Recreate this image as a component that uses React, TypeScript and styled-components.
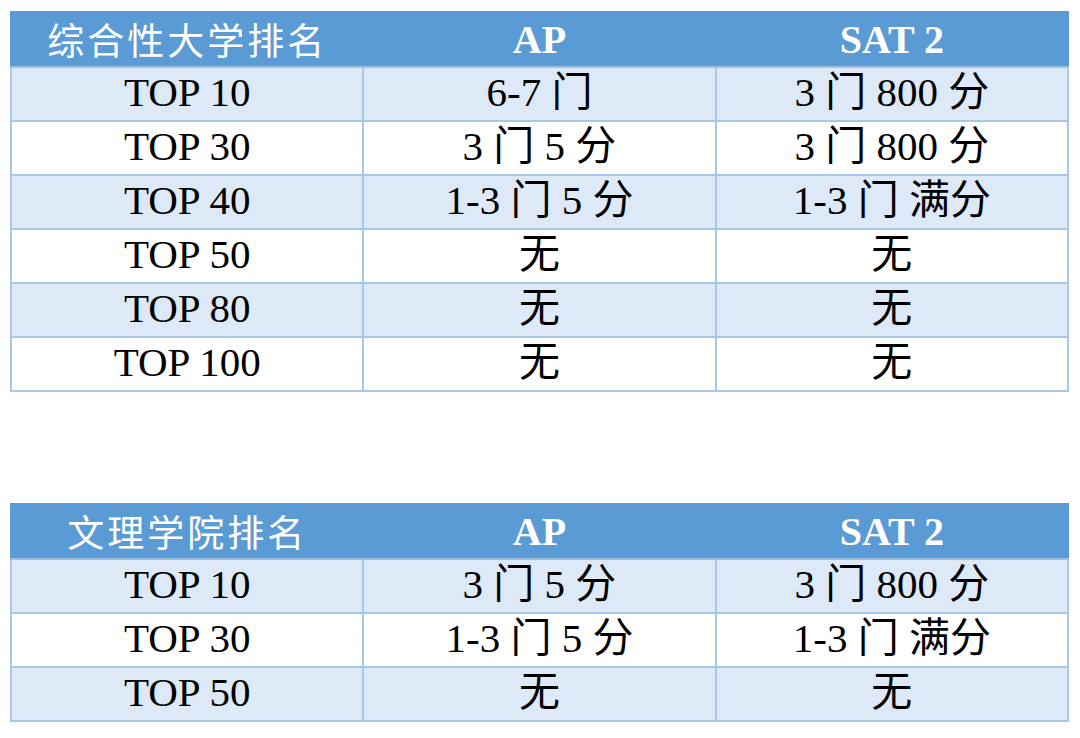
import styled, { createGlobalStyle } from 'styled-components';

const GlobalStyle = createGlobalStyle`
  html, body {
    margin: 0;
    padding: 0;
    background: #ffffff;
  }
`;

type Row = [string, string, string];

const comprehensive: Row[] = [
  ['TOP 10', '6-7 门', '3 门 800 分'],
  ['TOP 30', '3 门 5 分', '3 门 800 分'],
  ['TOP 40', '1-3 门 5 分', '1-3 门 满分'],
  ['TOP 50', '无', '无'],
  ['TOP 80', '无', '无'],
  ['TOP 100', '无', '无'],
];

const liberalArts: Row[] = [
  ['TOP 10', '3 门 5 分', '3 门 800 分'],
  ['TOP 30', '1-3 门 5 分', '1-3 门 满分'],
  ['TOP 50', '无', '无'],
];

const RankTable = ({ title, rows }: { title: string; rows: Row[] }) => {
  return (
    <Table>
      <thead>
        <tr>
          <TitleCell>{title}</TitleCell>
          <HeadCell>AP</HeadCell>
          <HeadCell>SAT 2</HeadCell>
        </tr>
      </thead>
      <tbody>
        {rows.map((row, i) => (
          <BodyRow key={row[0]} $banded={i % 2 === 0}>
            {row.map((cell, j) => (
              <Cell key={j}>{cell}</Cell>
            ))}
          </BodyRow>
        ))}
      </tbody>
    </Table>
  );
};

const App = () => {
  return (
    <Page>
      <GlobalStyle />
      <RankTable title="综合性大学排名" rows={comprehensive} />
      <RankTable title="文理学院排名" rows={liberalArts} />
    </Page>
  );
};

const Page = styled.div`
  width: 1080px;
  height: 738px;
  box-sizing: border-box;
  padding: 11px 0 0 10px;
  display: flex;
  flex-direction: column;
  gap: 111px;
  overflow: hidden;
`;

const Table = styled.table`
  width: 1059px;
  border-collapse: collapse;
  table-layout: fixed;
  font-family: 'Liberation Serif', 'Noto Sans CJK SC', serif;
  color: #000;
`;

const HeadCell = styled.th`
  height: 53px;
  padding: 0;
  background: #5b9bd5;
  border: 2px solid #5b9bd5;
  border-bottom-color: #9cc2e5;
  color: #fff;
  font-size: 40px;
  font-weight: 700;
  text-align: center;
  vertical-align: middle;
  line-height: 1;
`;

const TitleCell = styled(HeadCell)`
  font-family: 'Noto Sans CJK SC', sans-serif;
  font-weight: 400;
  font-size: 37px;
  letter-spacing: 3px;
`;

const BodyRow = styled.tr<{ $banded: boolean }>`
  background: ${(p) => (p.$banded ? '#dde9f6' : '#ffffff')};
`;

const Cell = styled.td`
  height: 49px;
  padding: 0 0 3px;
  border: 2px solid #a7c8ea;
  font-size: 41px;
  text-align: center;
  vertical-align: middle;
  line-height: 1;
  white-space: nowrap;
`;

export default App;
